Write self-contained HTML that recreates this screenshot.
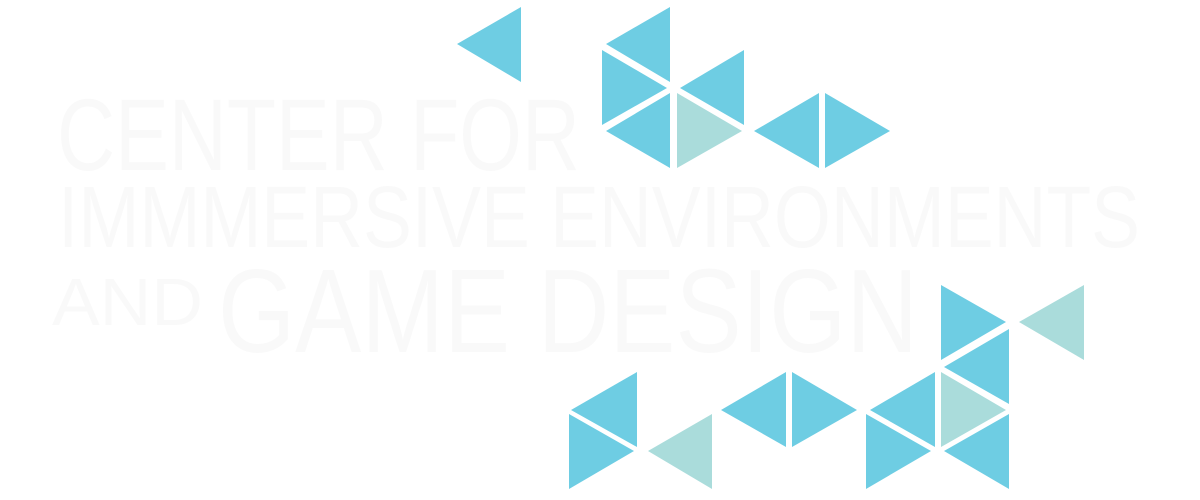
<!DOCTYPE html>
<html><head><meta charset="utf-8"><style>html,body{margin:0;padding:0;background:#fff;width:1200px;height:500px;overflow:hidden}</style></head>
<body>
<svg width="1200" height="500" viewBox="0 0 1200 500" xmlns="http://www.w3.org/2000/svg">
<g font-family="Liberation Sans, sans-serif" fill="#f9f9f9">
<text x="57" y="170" font-size="102" textLength="523" lengthAdjust="spacingAndGlyphs">CENTER FOR</text>
<text x="58" y="247" font-size="87" textLength="1082" lengthAdjust="spacingAndGlyphs">IMMMERSIVE ENVIRONMENTS</text>
<text x="52" y="325" font-size="67" textLength="151" lengthAdjust="spacingAndGlyphs">AND</text>
<text x="218" y="352" font-size="119" textLength="700" lengthAdjust="spacingAndGlyphs">GAME DESIGN</text>
</g>
<g fill="#6ecde3">
<polygon points="457,44 521,7 521,82"/>
<polygon points="606,44 670,7 670,82"/>
<polygon points="602,50 667,88 602,125"/>
<polygon points="680,88 744,50 744,125"/>
<polygon points="606,131 670,93 670,168"/>
<polygon points="754,131 819,93 819,168"/>
<polygon points="825,93 890,131 825,168"/>
<polygon points="941,285 1006,322 941,360"/>
<polygon points="944,367 1009,329 1009,404"/>
<polygon points="571,410 637,372 637,447"/>
<polygon points="569,414 634,451 569,489"/>
<polygon points="721,410 786,372 786,447"/>
<polygon points="792,372 857,410 792,447"/>
<polygon points="870,410 935,372 935,447"/>
<polygon points="866,414 931,451 866,489"/>
<polygon points="944,451 1009,414 1009,489"/>
</g>
<g fill="#aadcdb">
<polygon points="677,93 742,131 677,168"/>
<polygon points="1019,322 1084,285 1084,360"/>
<polygon points="648,451 712,414 712,489"/>
<polygon points="941,372 1006,410 941,447"/>
</g>
</svg>
</body></html>
